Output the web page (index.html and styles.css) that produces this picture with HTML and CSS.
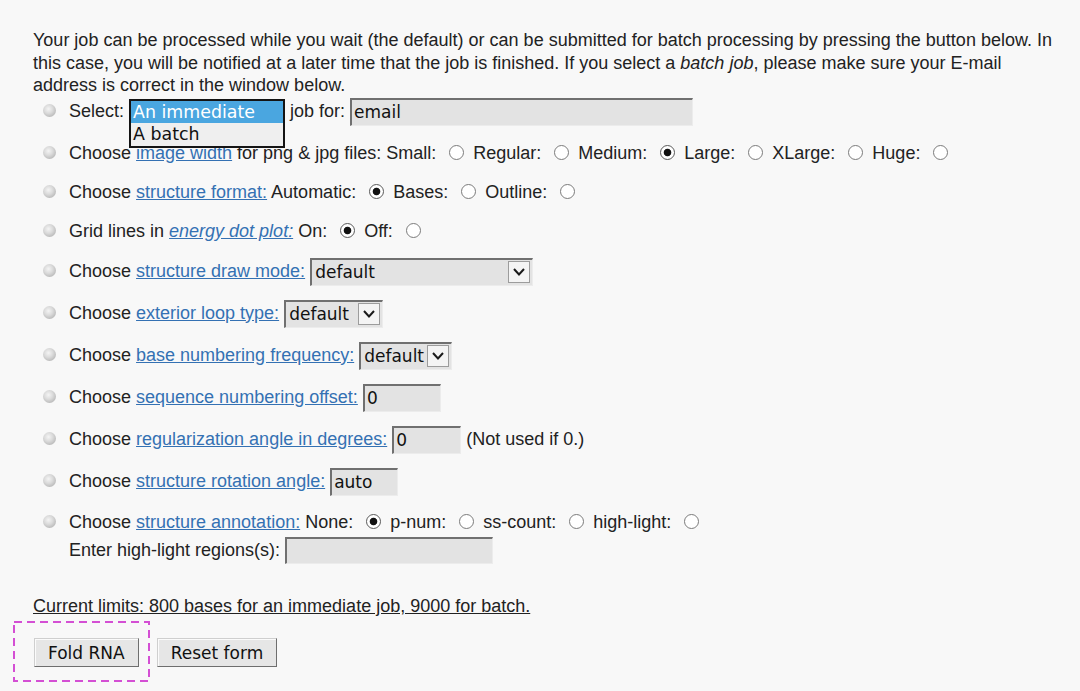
FILE: index.html
```html
<!DOCTYPE html>
<html lang="en">
<head>
<meta charset="utf-8">
<title>Fold RNA form</title>
<link rel="stylesheet" href="styles.css">
</head>
<body>
<div class="page">
  <p class="intro">Your job can be processed while you wait (the default) or can be submitted for batch processing by pressing the button below. In this case, you will be notified at a later time that the job is finished. If you select a <i>batch job</i>, please make sure your E-mail address is correct in the window below.</p>
  <ul class="opts">
    <li class="opt tall first"><span class="dot"></span><div class="body">Select: <span class="combo"><span class="listbox"><span class="option sel">An immediate</span><span class="option">A batch</span></span></span> job for: <input class="field w-email" type="text" value="email"></div></li>
    <li class="opt"><span class="dot"></span><div class="body">Choose <a href="#">image width</a> for png &amp; jpg files: Small: <input class="radio" type="radio" name="iw"> Regular: <input class="radio" type="radio" name="iw"> Medium: <input class="radio" type="radio" name="iw" checked> Large: <input class="radio" type="radio" name="iw"> XLarge: <input class="radio" type="radio" name="iw"> Huge: <input class="radio" type="radio" name="iw"></div></li>
    <li class="opt"><span class="dot"></span><div class="body">Choose <a href="#">structure format:</a> Automatic: <input class="radio" type="radio" name="sf" checked> Bases: <input class="radio" type="radio" name="sf"> Outline: <input class="radio" type="radio" name="sf"></div></li>
    <li class="opt"><span class="dot"></span><div class="body">Grid lines in <a href="#"><i>energy dot plot:</i></a> On: <input class="radio" type="radio" name="gl" checked> Off: <input class="radio" type="radio" name="gl"></div></li>
    <li class="opt tall"><span class="dot"></span><div class="body">Choose <a href="#">structure draw mode:</a> <span class="select w-draw"><span class="val">default</span><span class="arrow"><svg width="14" height="10" viewBox="0 0 14 10"><polyline points="2,2 7,7.5 12,2" fill="none" stroke="#1a1a1a" stroke-width="2"/></svg></span></span></div></li>
    <li class="opt tall"><span class="dot"></span><div class="body">Choose <a href="#">exterior loop type:</a> <span class="select w-loop"><span class="val">default</span><span class="arrow"><svg width="14" height="10" viewBox="0 0 14 10"><polyline points="2,2 7,7.5 12,2" fill="none" stroke="#1a1a1a" stroke-width="2"/></svg></span></span></div></li>
    <li class="opt tall"><span class="dot"></span><div class="body">Choose <a href="#">base numbering frequency:</a> <span class="select w-freq"><span class="val">default</span><span class="arrow"><svg width="14" height="10" viewBox="0 0 14 10"><polyline points="2,2 7,7.5 12,2" fill="none" stroke="#1a1a1a" stroke-width="2"/></svg></span></span></div></li>
    <li class="opt tall"><span class="dot"></span><div class="body">Choose <a href="#">sequence numbering offset:</a> <input class="field w-offset" type="text" value="0"></div></li>
    <li class="opt tall"><span class="dot"></span><div class="body">Choose <a href="#">regularization angle in degrees:</a> <input class="field w-angle" type="text" value="0"> (Not used if 0.)</div></li>
    <li class="opt tall"><span class="dot"></span><div class="body">Choose <a href="#">structure rotation angle:</a> <input class="field w-rot" type="text" value="auto"></div></li>
    <li class="opt multi"><span class="dot"></span><div class="body">
      <div class="line">Choose <a href="#">structure annotation:</a> None: <input class="radio" type="radio" name="an" checked> p-num: <input class="radio" type="radio" name="an"> ss-count: <input class="radio" type="radio" name="an"> high-light: <input class="radio" type="radio" name="an"></div>
      <div class="subline">Enter high-light regions(s): <input class="field w-hl" type="text" value=""></div>
    </div></li>
  </ul>
  <p class="limits">Current limits: 800 bases for an immediate job, 9000 for batch.</p>
  <div class="actions">
    <button class="btn" type="button">Fold RNA</button>
    <button class="btn" type="button">Reset form</button>
    <span class="mark"><svg width="137" height="61" viewBox="0 0 137 61"><rect x="1" y="1" width="135" height="59" fill="none" stroke="#d44fd4" stroke-width="2" stroke-dasharray="8 5"/></svg></span>
  </div>
</div>
</body>
</html>
```

FILE: styles.css
```css
body {
  margin: 0;
  background: #f8f8f8;
  color: #222;
  font-family: "Liberation Sans", Arial, sans-serif;
  font-size: 18px;
}

.page {
  padding: 29px 15px 20px 33px;
}

.intro {
  margin: 0;
  line-height: 22.5px;
}

.opts {
  list-style: none;
  margin: 0;
  padding: 0 0 0 10px;
}

.opt {
  display: flex;
  align-items: flex-start;
  margin-bottom: 13px;
}

.opt.first {
  margin-bottom: 14px;
}

.opt:last-child {
  margin-bottom: 0;
}

.dot {
  flex: none;
  width: 13px;
  height: 13px;
  border-radius: 50%;
  margin: 6px 13px 0 0;
  background: radial-gradient(circle at 42% 38%, #f4f4f4 0, #dadada 40%, #b8b8b8 78%, #a8a8a8 100%);
}

.tall .dot {
  margin-top: 7px;
}

.body {
  line-height: 26px;
  height: 26px;
}

.tall .body {
  line-height: 29px;
  height: 29px;
}

.multi .body {
  height: auto;
}

.line {
  height: 26px;
}

.subline {
  line-height: 28px;
  height: 28px;
  margin-top: 1px;
}

a {
  color: #3471b3;
  text-decoration: underline;
}

.radio {
  -webkit-appearance: none;
  appearance: none;
  box-sizing: border-box;
  width: 15px;
  height: 15px;
  margin: 0 4px 0 8px;
  border: 1px solid #7b7b7b;
  border-radius: 50%;
  background: #fff;
  vertical-align: -1px;
}

.radio:checked {
  border-color: #5a5a5a;
  background: radial-gradient(circle, #111 0, #111 3.4px, #fff 4.2px);
}

.field {
  box-sizing: border-box;
  height: 28px;
  margin: 0;
  padding: 0 2px;
  background: #e3e3e3;
  border-style: solid;
  border-width: 2px 1px 1px 2px;
  border-color: #707070 #ececec #ececec #707070;
  font-family: "DejaVu Sans", Verdana, sans-serif;
  font-size: 17px;
  color: #111;
  vertical-align: middle;
}

.w-email { width: 343px; }
.w-offset { width: 78px; }
.w-angle { width: 69px; }
.w-rot { width: 68px; }
.w-hl { width: 208px; height: 27px; }

.combo {
  position: relative;
  display: inline-block;
  width: 156px;
  height: 28px;
  vertical-align: middle;
}

.listbox {
  position: absolute;
  left: 0;
  top: 1px;
  z-index: 2;
  box-sizing: border-box;
  width: 156px;
  height: 49px;
  display: flex;
  flex-direction: column;
  border: 2px solid #141414;
  background: #efefef;
  font-family: "DejaVu Sans", Verdana, sans-serif;
  font-size: 17.4px;
  line-height: 22px;
  color: #111;
}

.option {
  padding-left: 2px;
  height: 22px;
}

.option.sel {
  background: #4aa6e0;
  color: #fff;
}

.select {
  display: inline-flex;
  align-items: center;
  box-sizing: border-box;
  height: 28px;
  padding-left: 3px;
  background: #e3e3e3;
  border-style: solid;
  border-width: 2px 1px 1px 2px;
  border-color: #707070 #ececec #ececec #707070;
  font-family: "DejaVu Sans", Verdana, sans-serif;
  font-size: 17px;
  line-height: 22px;
  color: #111;
  vertical-align: middle;
}

.select .val {
  flex: 1;
}

.arrow {
  flex: none;
  box-sizing: border-box;
  width: 22px;
  height: 22px;
  margin-right: 2px;
  display: flex;
  align-items: center;
  justify-content: center;
  border: 1px solid #9c9c9c;
  background: #f4f4f4;
}

.w-draw { width: 223px; }
.w-loop { width: 99px; }
.w-freq { width: 93px; }

.limits {
  margin: 31px 0 0;
  line-height: 22.5px;
  text-decoration: underline;
}

.actions {
  position: relative;
  display: flex;
  gap: 18px;
  margin-top: 21px;
  margin-left: 1px;
}

.btn {
  box-sizing: border-box;
  height: 29px;
  padding: 0 13px;
  margin: 0;
  background: #e6e6e6;
  border: 1px solid;
  border-color: #cfcfcf #6e6e6e #6e6e6e #cfcfcf;
  box-shadow: inset 1px 1px 0 #fbfbfb;
  font-family: "DejaVu Sans", Verdana, sans-serif;
  font-size: 17px;
  color: #111;
}

.mark {
  position: absolute;
  left: -21px;
  top: -17px;
  width: 137px;
  height: 61px;
  pointer-events: none;
}

.mark svg {
  display: block;
}
```
